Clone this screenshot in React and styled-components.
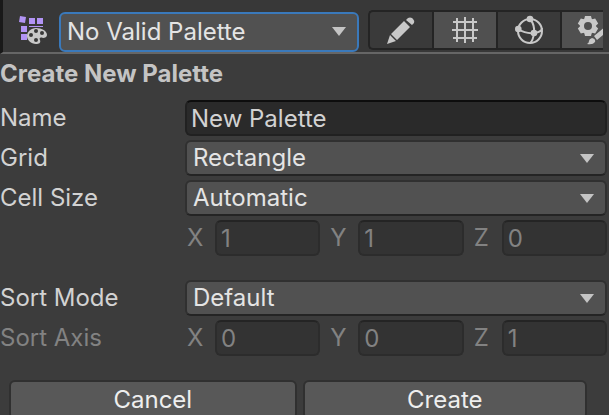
import React, { useState } from "react";
import styled, { createGlobalStyle } from "styled-components";

const GlobalStyle = createGlobalStyle`
  * {
    box-sizing: border-box;
  }
  body {
    margin: 0;
    background: #3c3c3c;
    overflow: hidden;
  }
  body, input, select, button {
    font-family: Inter, sans-serif;
    font-size: 24px;
    line-height: 32px;
    color: #d2d2d2;
  }
`;
const Toolbar = styled.header`
  display: flex;
  align-items: flex-start;
  height: 54px;
  padding: 10px 6px 0 16px;
  background: #383838;
  border-left: 3px solid #191919;
  border-bottom: 2px solid #666666;
`;
const PaletteIcon = styled.svg`
  flex: none;
  width: 28px;
  height: 28px;
  margin: 6px 12px 0 0;
`;
const SelectBox = styled.div`
  position: relative;
  flex: 1;
  min-width: 0;
  margin-top: ${(props) => (props.$focused ? "2px" : "0")};
`;
const Select = styled.select`
  display: block;
  appearance: none;
  width: 100%;
  height: ${(props) => (props.$focused ? "40px" : "36px")};
  padding: 0 32px 0 6px;
  background: #515151;
  color: #e4e4e4;
  border: 2px solid ${(props) => (props.$focused ? "#3a79bb" : "#303030")};
  border-bottom-color: ${(props) => (props.$focused ? "#3a79bb" : "#242424")};
  border-radius: 6px;
  outline: none;
`;
const Arrow = styled.svg`
  position: absolute;
  right: 12px;
  top: ${(props) => (props.$focused ? "15px" : "14px")};
  width: 16px;
  height: 9px;
  pointer-events: none;
`;
const Tools = styled.div`
  display: flex;
  flex: none;
  width: 235px;
  height: 40px;
  margin-left: 9px;
  overflow: hidden;
  background: #242424;
  border: 2px solid #242424;
  border-right: none;
  border-radius: 5px 0 0 5px;
  gap: 2px;
`;
const Tool = styled.button`
  flex: none;
  width: 62px;
  padding: 0;
  border: none;
  background: ${(props) => (props.$active ? "#505050" : "#3a3a3a")};
  svg {
    display: block;
    margin: 0 auto;
  }
`;
const Title = styled.h1`
  margin: 0;
  padding: 3px 0 10px;
  font-size: 24px;
  line-height: 33px;
  font-weight: 700;
  color: #c4c4c4;
`;
const Row = styled.div`
  display: grid;
  grid-template-columns: 185px 1fr;
  align-items: center;
  height: 36px;
  margin: 0 2px 4px 0;
  color: ${(props) => (props.$disabled ? "#828282" : "#d2d2d2")};
`;
const Label = styled.label``;
const Input = styled.input`
  width: 100%;
  min-width: 0;
  height: 36px;
  padding: 0 4px;
  background: #2a2a2a;
  border: 2px solid #212121;
  border-top-color: #0d0d0d;
  border-radius: 6px;
  outline: none;
  &:disabled {
    background: #333333;
    color: #828282;
    border-color: #2c2c2c;
    border-top-color: #242424;
  }
`;
const Axes = styled.div`
  display: grid;
  grid-template-columns: repeat(3, 1fr);
  grid-column: 2;
  gap: 8px;
`;
const Axis = styled.label`
  display: grid;
  grid-template-columns: 28px 1fr;
  align-items: center;
  padding-left: 2px;
`;
const Spacer = styled.div`
  height: 20px;
`;
const Actions = styled.div`
  display: flex;
  gap: 6px;
  padding: 0 22px 0 9px;
  margin-top: 24px;
`;
const Button = styled.button`
  flex: 1 1 auto;
  height: 40px;
  padding: 0;
  background: #585858;
  color: #eeeeee;
  border: 2px solid #303030;
  border-radius: 6px;
`;

const Dropdown = ({ id, label, focused, options }) => (
  <SelectBox $focused={focused}>
    <Select id={id} aria-label={label} $focused={focused}>
      {options.map((option) => (
        <option key={option}>{option}</option>
      ))}
    </Select>
    <Arrow $focused={focused} viewBox="0 0 16 9">
      <path d="M1 0h14L8 9z" fill="#c4c4c4" />
    </Arrow>
  </SelectBox>
);

const Vector = ({ values }) => (
  <Axes>
    {["X", "Y", "Z"].map((axis, i) => (
      <Axis key={axis}>
        {axis}
        <Input disabled defaultValue={values[i]} />
      </Axis>
    ))}
  </Axes>
);

const TilePalette = () => (
  <PaletteIcon viewBox="0 0 28 28">
    <path
      d="M1 0l6 1-1 6-6-1zM10 2h6v6h-6zM18 2h6v6h-6zM2 10h6v6H2zM2 18h6v6H2zM10 10h14v1H10z"
      fill="#b294f5"
    />
    <path
      d="M17 12c6 0 11 3 11 7 0 2-2 3-4 3-3-1-4 0-3 2 1 3-1 4-4 4-5 0-9-4-9-8s4-8 9-8z"
      fill="#c8c8c8"
    />
    <g fill="#383838">
      <circle cx="17" cy="15" r="2" />
      <circle cx="23" cy="17" r="2" />
      <circle cx="12" cy="19" r="2" />
      <circle cx="17" cy="24" r="2" />
    </g>
  </PaletteIcon>
);

const PencilIcon = () => (
  <svg width="28" height="28" viewBox="0 0 28 28" fill="#c8c8c8">
    <path d="M0 28l3-9 6 6zM4 18L17 5l6 6-13 13zM19 4l2-2q2-1 4 0l1 1q2 2 1 4l-2 2z" />
  </svg>
);

const GridIcon = () => (
  <svg width="26" height="26" viewBox="0 0 26 26" stroke="#c8c8c8" strokeWidth="2">
    <path d="M5 1v24M13 0v26M21 1v24M1 5h24M0 13h26M1 21h24" />
  </svg>
);

const SphereIcon = () => (
  <svg width="28" height="30" viewBox="0 0 28 30" fill="none" stroke="#c8c8c8" strokeWidth="2">
    <circle cx="15" cy="16" r="12" />
    <path d="M15 4q5 6 4 14t-4 10M3 14q8 5 16 4t8-5" />
    <g fill="#c8c8c8" stroke="none">
      <circle cx="15" cy="4" r="3.300" />
      <circle cx="3.300" cy="14" r="3.300" />
      <circle cx="19" cy="18" r="3.300" />
    </g>
  </svg>
);

const GearIcon = () => (
  <svg width="32" height="30" viewBox="0 0 32 30" fill="#c8c8c8">
    <circle cx="11" cy="11" r="6" fill="none" stroke="#c8c8c8" strokeWidth="4" />
    {[0, 60, 120, 180, 240, 300].map((angle) => (
      <path key={angle} d="M7 5l1-4h6l1 4z" transform={`rotate(${angle} 11 11)`} />
    ))}
    <path
      d="M30 10L17 21l3 4 12-10zM15 23q4 1 3 4-2 3-8 2 2-1 2-3t3-3z"
      stroke="#505050"
      paintOrder="stroke"
    />
  </svg>
);

const App = () => {
  const [name, setName] = useState("New Palette");

  return (
    <>
      <GlobalStyle />
      <Toolbar>
        <TilePalette />
        <Dropdown label="Palette" focused options={["No Valid Palette"]} />
        <Tools>
          <Tool aria-label="Edit">
            <PencilIcon />
          </Tool>
          <Tool aria-label="Grid" $active>
            <GridIcon />
          </Tool>
          <Tool aria-label="Gizmos">
            <SphereIcon />
          </Tool>
          <Tool aria-label="Brush settings" $active>
            <GearIcon />
          </Tool>
        </Tools>
      </Toolbar>
      <main>
        <Title>Create New Palette</Title>
        <Row>
          <Label htmlFor="name">Name</Label>
          <Input id="name" value={name} onChange={(e) => setName(e.target.value)} />
        </Row>
        <Row>
          <Label htmlFor="grid">Grid</Label>
          <Dropdown id="grid" options={["Rectangle", "Hexagon", "Isometric"]} />
        </Row>
        <Row>
          <Label htmlFor="cell">Cell Size</Label>
          <Dropdown id="cell" options={["Automatic", "Manual"]} />
        </Row>
        <Row $disabled>
          <Vector values={[1, 1, 0]} />
        </Row>
        <Spacer />
        <Row>
          <Label htmlFor="sort">Sort Mode</Label>
          <Dropdown id="sort" options={["Default", "Custom Axis"]} />
        </Row>
        <Row $disabled>
          <Label as="span">Sort Axis</Label>
          <Vector values={[0, 0, 1]} />
        </Row>
        <Actions>
          <Button>Cancel</Button>
          <Button>Create</Button>
        </Actions>
      </main>
    </>
  );
};
export default App;
